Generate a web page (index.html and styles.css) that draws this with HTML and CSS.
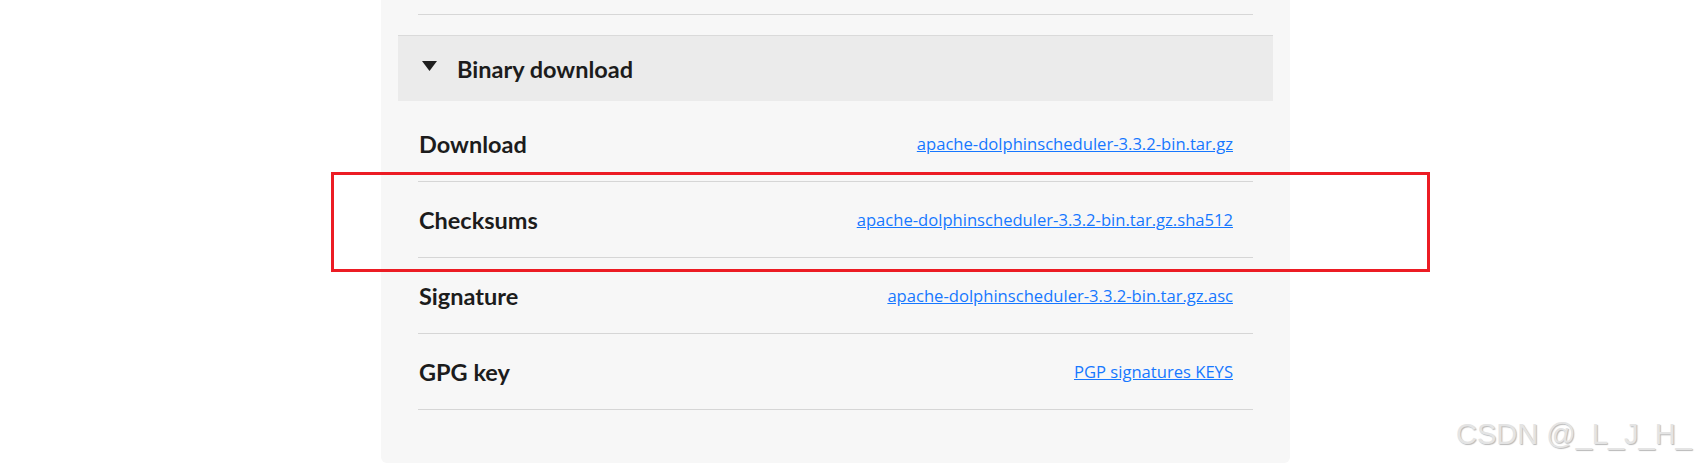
FILE: index.html
```html
<!DOCTYPE html>
<html lang="en">
<head>
<meta charset="utf-8">
<title>Binary download</title>
<link rel="stylesheet" href="styles.css">
</head>
<body>
<div class="page">
  <section class="panel">
    <div class="prev-row"></div>
    <div class="collapse-header">
      <svg class="caret" width="15" height="10" viewBox="0 0 15 10"><path d="M0 0H15L7.5 10Z" fill="#1f1f1f"/></svg>
      <span class="collapse-title">Binary download</span>
    </div>
    <div class="rows">
      <div class="row"><span class="label">Download</span><a class="link" href="#">apache-dolphinscheduler-3.3.2-bin.tar.gz</a></div>
      <div class="row"><span class="label">Checksums</span><a class="link" href="#">apache-dolphinscheduler-3.3.2-bin.tar.gz.sha512</a></div>
      <div class="row"><span class="label">Signature</span><a class="link" href="#">apache-dolphinscheduler-3.3.2-bin.tar.gz.asc</a></div>
      <div class="row"><span class="label">GPG key</span><a class="link" href="#">PGP signatures KEYS</a></div>
    </div>
  </section>
  <div class="highlight-box"></div>
  <div class="watermark">CSDN @_L_J_H_</div>
</div>
</body>
</html>
```
FILE: styles.css
```css
html, body {
  margin: 0;
  padding: 0;
  background: #ffffff;
}
body {
  font-family: Lato, "Noto Sans", sans-serif;
  color: #1c1c1c;
  height: 464px;
  overflow: hidden;
}
.page {
  position: relative;
  width: 1697px;
  height: 464px;
}
.panel {
  margin-left: 381px;
  width: 909px;
  box-sizing: border-box;
  padding: 0 17px 53px;
  background: #f7f7f7;
  border-radius: 0 0 6px 6px;
}
.prev-row {
  height: 14px;
  margin: 0 20px;
  border-bottom: 1px solid #d7d7d7;
}
.collapse-header {
  margin-top: 20px;
  height: 65px;
  border-top: 1px solid #dadada;
  background: #ebebeb;
  display: flex;
  align-items: center;
  padding-left: 24px;
}
.caret {
  margin-bottom: 6px;
  margin-right: 20px;
  flex: none;
}
.collapse-title {
  font-weight: 700;
  font-size: 23.5px;
  color: #1c1c1c;
}
.rows {
  margin: 5px 20px 0;
}
.row {
  height: 75px;
  border-bottom: 1px solid #d6d6d6;
  display: flex;
  align-items: center;
  justify-content: space-between;
  padding: 0 20px 0 1px;
}
.label {
  font-weight: 700;
  font-size: 23.5px;
  color: #1c1c1c;
}
.link {
  font-family: "Open Sans", "Noto Sans", sans-serif;
  font-size: 16.6px;
  color: #1677ff;
  text-decoration: underline;
}
.highlight-box {
  position: absolute;
  left: 331px;
  top: 172px;
  width: 1099px;
  height: 100px;
  box-sizing: border-box;
  border: 3px solid #ec1c24;
}
.watermark {
  position: absolute;
  left: 1456px;
  top: 418px;
  font-family: "Liberation Sans", Arial, sans-serif;
  font-size: 29px;
  color: #e4e4e4;
  text-shadow: 1px 1px 1px rgba(0, 0, 0, 0.28);
  white-space: nowrap;
}
```
